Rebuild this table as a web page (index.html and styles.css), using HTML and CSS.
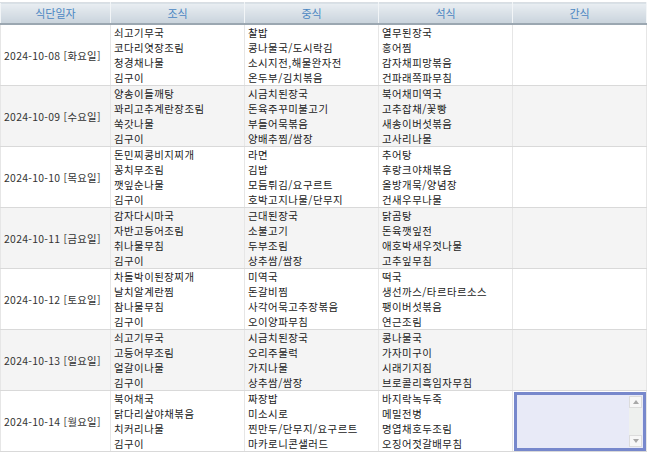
FILE: index.html
```html
<!DOCTYPE html>
<html lang="ko">
<head>
<meta charset="utf-8">
<link rel="stylesheet" href="styles.css">
</head>
<body>
<table class="meal">
  <colgroup><col class="w-date"><col class="w-m"><col class="w-m"><col class="w-m"><col></colgroup>
  <thead>
    <tr><th>식단일자</th><th>조식</th><th>중식</th><th>석식</th><th>간식</th></tr>
  </thead>
  <tbody>
    <tr>
      <td class="date">2024-10-08 [화요일]</td>
      <td>쇠고기무국<br>코다리엿장조림<br>청경채나물<br>김구이</td>
      <td>찰밥<br>콩나물국/도시락김<br>소시지전,해물완자전<br>온두부/김치볶음</td>
      <td>열무된장국<br>홍어찜<br>감자채피망볶음<br>건파래쪽파무침</td>
      <td></td>
    </tr>
    <tr class="alt">
      <td class="date">2024-10-09 [수요일]</td>
      <td>양송이들깨탕<br>꽈리고추계란장조림<br>쑥갓나물<br>김구이</td>
      <td>시금치된장국<br>돈육주꾸미불고기<br>부들어묵볶음<br>양배추찜/쌈장</td>
      <td>북어채미역국<br>고추잡채/꽃빵<br>새송이버섯볶음<br>고사리나물</td>
      <td></td>
    </tr>
    <tr>
      <td class="date">2024-10-10 [목요일]</td>
      <td>돈민찌콩비지찌개<br>꽁치무조림<br>깻잎순나물<br>김구이</td>
      <td>라면<br>김밥<br>모듬튀김/요구르트<br>호박고지나물/단무지</td>
      <td>추어탕<br>후랑크야채볶음<br>올방개묵/양념장<br>건새우무나물</td>
      <td></td>
    </tr>
    <tr class="alt">
      <td class="date">2024-10-11 [금요일]</td>
      <td>감자다시마국<br>자반고등어조림<br>취나물무침<br>김구이</td>
      <td>근대된장국<br>소불고기<br>두부조림<br>상추쌈/쌈장</td>
      <td>닭곰탕<br>돈육깻잎전<br>애호박새우젓나물<br>고추잎무침</td>
      <td></td>
    </tr>
    <tr>
      <td class="date">2024-10-12 [토요일]</td>
      <td>차돌박이된장찌개<br>날치알계란찜<br>참나물무침<br>김구이</td>
      <td>미역국<br>돈갈비찜<br>사각어묵고추장볶음<br>오이양파무침</td>
      <td>떡국<br>생선까스/타르타르소스<br>팽이버섯볶음<br>연근조림</td>
      <td></td>
    </tr>
    <tr class="alt">
      <td class="date">2024-10-13 [일요일]</td>
      <td>쇠고기무국<br>고등어무조림<br>얼갈이나물<br>김구이</td>
      <td>시금치된장국<br>오리주물럭<br>가지나물<br>상추쌈/쌈장</td>
      <td>콩나물국<br>가자미구이<br>시래기지짐<br>브로콜리흑임자무침</td>
      <td></td>
    </tr>
    <tr>
      <td class="date">2024-10-14 [월요일]</td>
      <td>북어채국<br>닭다리살야채볶음<br>치커리나물<br>김구이</td>
      <td>짜장밥<br>미소시로<br>찐만두/단무지/요구르트<br>마카로니콘샐러드</td>
      <td>바지락녹두죽<br>메밀전병<br>명엽채호두조림<br>오징어젓갈배무침</td>
      <td class="snack">
        <div class="memo">
          <div class="memo-body"></div>
          <div class="memo-bar">
            <span class="arrow up"></span>
            <span class="track"></span>
            <span class="arrow down"></span>
          </div>
        </div>
      </td>
    </tr>
  </tbody>
</table>
</body>
</html>
```
FILE: styles.css
```css
html, body {
  margin: 0;
  padding: 0;
  background: #ffffff;
}
body {
  font-family: "Noto Sans CJK KR", "Noto Sans", sans-serif;
  color: #222;
}
.meal {
  border-collapse: collapse;
  table-layout: fixed;
  width: 647px;
  margin-top: 2px;
}
.w-date { width: 110px; }
.w-m { width: 134px; }
.meal th {
  height: 20px;
  padding: 0;
  font-size: 11px;
  font-weight: normal;
  color: #4a86c2;
  text-align: center;
  background: linear-gradient(#e9eef2, #c9d3dc);
  border-top: 1px solid #d9dee3;
  border-left: 1px solid #f2f5f7;
  border-right: 1px solid #f2f5f7;
  border-bottom: 2px solid #9ba7b1;
}
.meal td {
  font-size: 10.4px;
  letter-spacing: 0.5px;
  line-height: 15px;
  padding: 0 3px;
  vertical-align: top;
  border-left: 1px solid #e6e6e6;
  border-right: 1px solid #e6e6e6;
  border-bottom: 1px solid #d9d9d9;
  height: 60px;
  white-space: nowrap;
  overflow: hidden;
}
.meal td.date {
  vertical-align: middle;
  padding-left: 3px;
  padding-right: 0;
  letter-spacing: 0.3px;
  color: #333;
}
.meal tr.alt td {
  background: #f4f4f4;
}
.meal td.snack {
  padding: 0;
  vertical-align: middle;
}
.memo {
  display: flex;
  height: 53px;
  margin: 0 0 0 1px;
  border: 3px solid #7788cc;
  background: #e8eaf7;
}
.memo-body {
  flex: 1;
}
.memo-bar {
  width: 13px;
  margin: 1px 1px 1px 0;
  display: flex;
  flex-direction: column;
  background: #eef0ee;
}
.memo-bar .track {
  flex: 1;
}
.memo-bar .arrow {
  height: 12px;
  background: #f7f7f7;
  border: 1px solid #dcdcdc;
  box-sizing: border-box;
  display: flex;
  align-items: center;
  justify-content: center;
}
.memo-bar .arrow::before {
  content: "";
  width: 0;
  height: 0;
  border-left: 3px solid transparent;
  border-right: 3px solid transparent;
}
.memo-bar .up::before {
  border-bottom: 4px solid #a8a8a8;
}
.memo-bar .down::before {
  border-top: 4px solid #a8a8a8;
}
```
